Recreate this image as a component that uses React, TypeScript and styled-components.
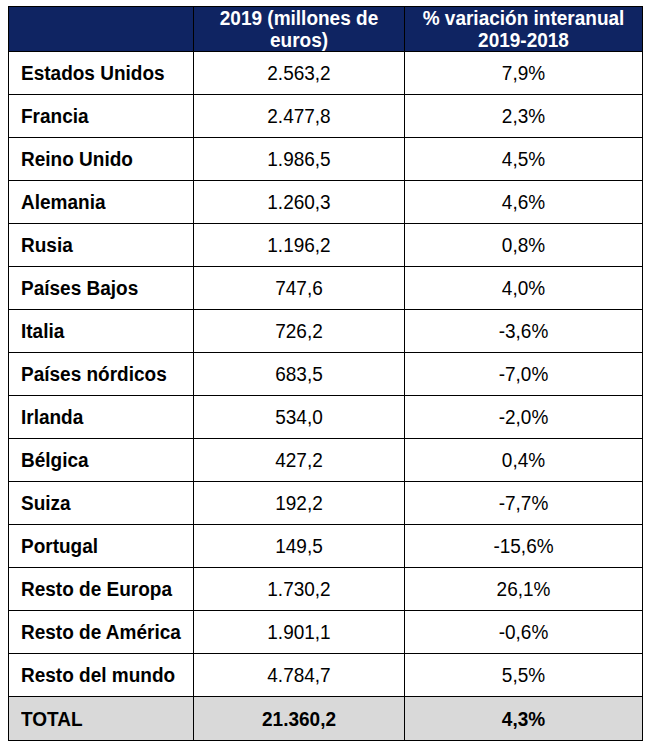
import React from "react";
import styled, { createGlobalStyle } from "styled-components";

interface Row {
  country: string;
  value: string;
  change: string;
}

const rows: Row[] = [
  { country: "Estados Unidos", value: "2.563,2", change: "7,9%" },
  { country: "Francia", value: "2.477,8", change: "2,3%" },
  { country: "Reino Unido", value: "1.986,5", change: "4,5%" },
  { country: "Alemania", value: "1.260,3", change: "4,6%" },
  { country: "Rusia", value: "1.196,2", change: "0,8%" },
  { country: "Países Bajos", value: "747,6", change: "4,0%" },
  { country: "Italia", value: "726,2", change: "-3,6%" },
  { country: "Países nórdicos", value: "683,5", change: "-7,0%" },
  { country: "Irlanda", value: "534,0", change: "-2,0%" },
  { country: "Bélgica", value: "427,2", change: "0,4%" },
  { country: "Suiza", value: "192,2", change: "-7,7%" },
  { country: "Portugal", value: "149,5", change: "-15,6%" },
  { country: "Resto de Europa", value: "1.730,2", change: "26,1%" },
  { country: "Resto de América", value: "1.901,1", change: "-0,6%" },
  { country: "Resto del mundo", value: "4.784,7", change: "5,5%" },
];

const GlobalStyle = createGlobalStyle`
  body {
    margin: 0;
    background: #fff;
    font-family: "Liberation Sans", Arial, sans-serif;
  }
`;

export default function App() {
  return (
    <>
      <GlobalStyle />
      <Page>
        <Table>
          <colgroup>
            <col style={{ width: 185 }} />
            <col style={{ width: 211 }} />
            <col style={{ width: 238 }} />
          </colgroup>
          <thead>
            <HeadRow>
              <HeadCell />
              <HeadCell>
                <Txt>
                  2019 (millones de
                  <br />
                  euros)
                </Txt>
              </HeadCell>
              <HeadCell>
                <Txt>
                  % variación interanual
                  <br />
                  2019-2018
                </Txt>
              </HeadCell>
            </HeadRow>
          </thead>
          <tbody>
            {rows.map((r) => (
              <BodyRow key={r.country}>
                <NameCell>
                  <Txt>{r.country}</Txt>
                </NameCell>
                <NumCell>
                  <Txt>{r.value}</Txt>
                </NumCell>
                <NumCell>
                  <Txt>{r.change}</Txt>
                </NumCell>
              </BodyRow>
            ))}
            <BodyRow total>
              <NameCell>
                <Txt>TOTAL</Txt>
              </NameCell>
              <NumCell bold>
                <Txt>21.360,2</Txt>
              </NumCell>
              <NumCell bold>
                <Txt>4,3%</Txt>
              </NumCell>
            </BodyRow>
          </tbody>
        </Table>
      </Page>
    </>
  );
}

const Page = styled.div`
  padding: 6px 0 0 8px;
`;

const Table = styled.table`
  border-collapse: collapse;
  table-layout: fixed;
  width: 634px;
  font-size: 19px;
  color: #000;
`;

// slight vertical stretch, the source font looks condensed
const Txt = styled.span`
  display: inline-block;
  transform: scaleY(1.1);
`;

const HeadRow = styled.tr`
  height: 45px;
  background: #0f2462;
`;

const HeadCell = styled.th`
  border: 1px solid #000;
  padding: 0 4px;
  color: #fff;
  font-weight: bold;
  text-align: center;
  line-height: 20px;
  vertical-align: middle;
`;

const BodyRow = styled.tr<{ total?: boolean }>`
  height: ${(p) => (p.total ? "44px" : "43px")};
  background: ${(p) => (p.total ? "#d9d9d9" : "#fff")};
`;

const NameCell = styled.td`
  border: 1px solid #000;
  padding: 0 0 0 12px;
  font-weight: bold;
  text-align: left;
  vertical-align: middle;
`;

const NumCell = styled.td<{ bold?: boolean }>`
  border: 1px solid #000;
  padding: 0;
  font-weight: ${(p) => (p.bold ? "bold" : "normal")};
  text-align: center;
  vertical-align: middle;
`;
